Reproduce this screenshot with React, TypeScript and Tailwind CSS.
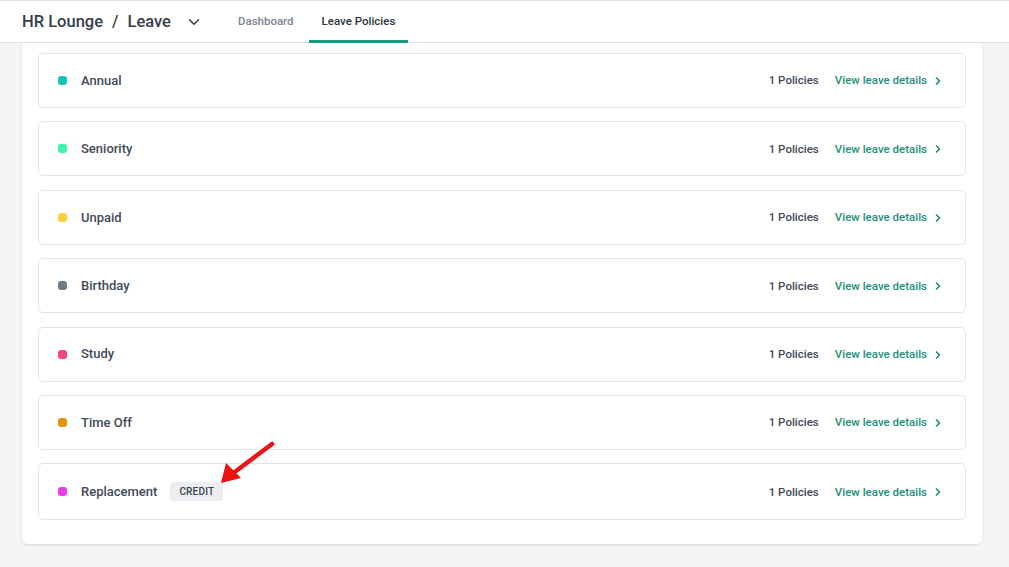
import { ChevronDown, ChevronRight } from 'lucide-react';

type LeaveType = {
  name: string;
  color: string;
  badge?: string;
};

const LEAVE_TYPES: LeaveType[] = [
  { name: 'Annual', color: 'bg-[#17c3b9]' },
  { name: 'Seniority', color: 'bg-[#3cf2a4]' },
  { name: 'Unpaid', color: 'bg-[#fbd13a]' },
  { name: 'Birthday', color: 'bg-[#6f7c87]' },
  { name: 'Study', color: 'bg-[#f2467a]' },
  { name: 'Time Off', color: 'bg-[#e0960b]' },
  { name: 'Replacement', color: 'bg-[#e43fe9]', badge: 'CREDIT' },
];

function LeaveRow({ item }: { item: LeaveType }) {
  return (
    <div
      className={`relative flex items-center justify-between rounded-[5px] border border-[#e3e5e8] bg-white pl-[19px] pr-[21px] ${
        item.badge ? 'h-[57px]' : 'h-[55px]'
      }`}
    >
      <div className="flex items-center">
        <span className={`h-[9px] w-[9px] rounded-[3px] ${item.color}`} />
        <span className="ml-[14px] text-[13px] font-medium text-[#414a57]">{item.name}</span>
        {item.badge && (
          <span className="ml-[13px] rounded-[3px] bg-[#eceef1] px-[9px] py-[2px] text-[10px] font-medium tracking-[0.2px] text-[#3a4350]">
            {item.badge}
          </span>
        )}
      </div>
      <div className="flex items-center pt-[1px]">
        <span className="text-[11.5px] font-medium text-[#414a57]">1 Policies</span>
        <a className="ml-[16px] flex items-center text-[11.5px] font-medium text-[#24907a]">
          View leave details
          <ChevronRight className="ml-[5px] h-[12px] w-[12px]" strokeWidth={3.4} />
        </a>
      </div>
    </div>
  );
}

export default function App() {
  return (
    <div
      className="relative h-[567px] w-full overflow-hidden bg-[#f4f5f7]"
      style={{ fontFamily: 'Roboto, "Noto Sans", sans-serif' }}
    >
      {/* Top nav */}
      <header className="flex h-[43px] items-center border-b border-t border-[#dfe1e4] bg-white pl-[22px]">
        <div className="flex items-center pt-[1px] text-[16.5px] font-medium text-[#363e4a]">
          <span>HR Lounge</span>
          <span className="mx-[9px]">/</span>
          <span>Leave</span>
          <ChevronDown className="ml-[14px] h-[18px] w-[18px]" strokeWidth={2} />
        </div>
        <nav className="ml-[28px] flex h-full items-stretch text-[11.5px] font-medium">
          <div className="flex items-center px-[7px] text-[#7b8594]">Dashboard</div>
          <div className="relative ml-[8px] flex items-center px-[13px] text-[#2d3440]">
            Leave Policies
            <span className="absolute bottom-[-1px] left-0 right-0 h-[3px] bg-[#159a7a]" />
          </div>
        </nav>
      </header>

      {/* Panel */}
      <main className="px-[22px] pr-[27px]">
        <section className="flex flex-col gap-[13.4px] rounded-b-[5px] bg-white px-[16px] pb-[24px] pt-[10px] shadow-[0_1px_3px_rgba(0,0,0,0.12)]">
          {LEAVE_TYPES.map((item) => (
            <LeaveRow key={item.name} item={item} />
          ))}
        </section>
      </main>

      {/* Annotation arrow */}
      <svg
        className="pointer-events-none absolute left-[218px] top-[440px]"
        width="60"
        height="48"
        viewBox="0 0 60 48"
      >
        <line x1="54" y1="4" x2="14" y2="34" stroke="#ee1111" strokeWidth="4.5" strokeLinecap="round" />
        <polygon points="3,43 8,23 23,38" fill="#ee1111" />
      </svg>
    </div>
  );
}
